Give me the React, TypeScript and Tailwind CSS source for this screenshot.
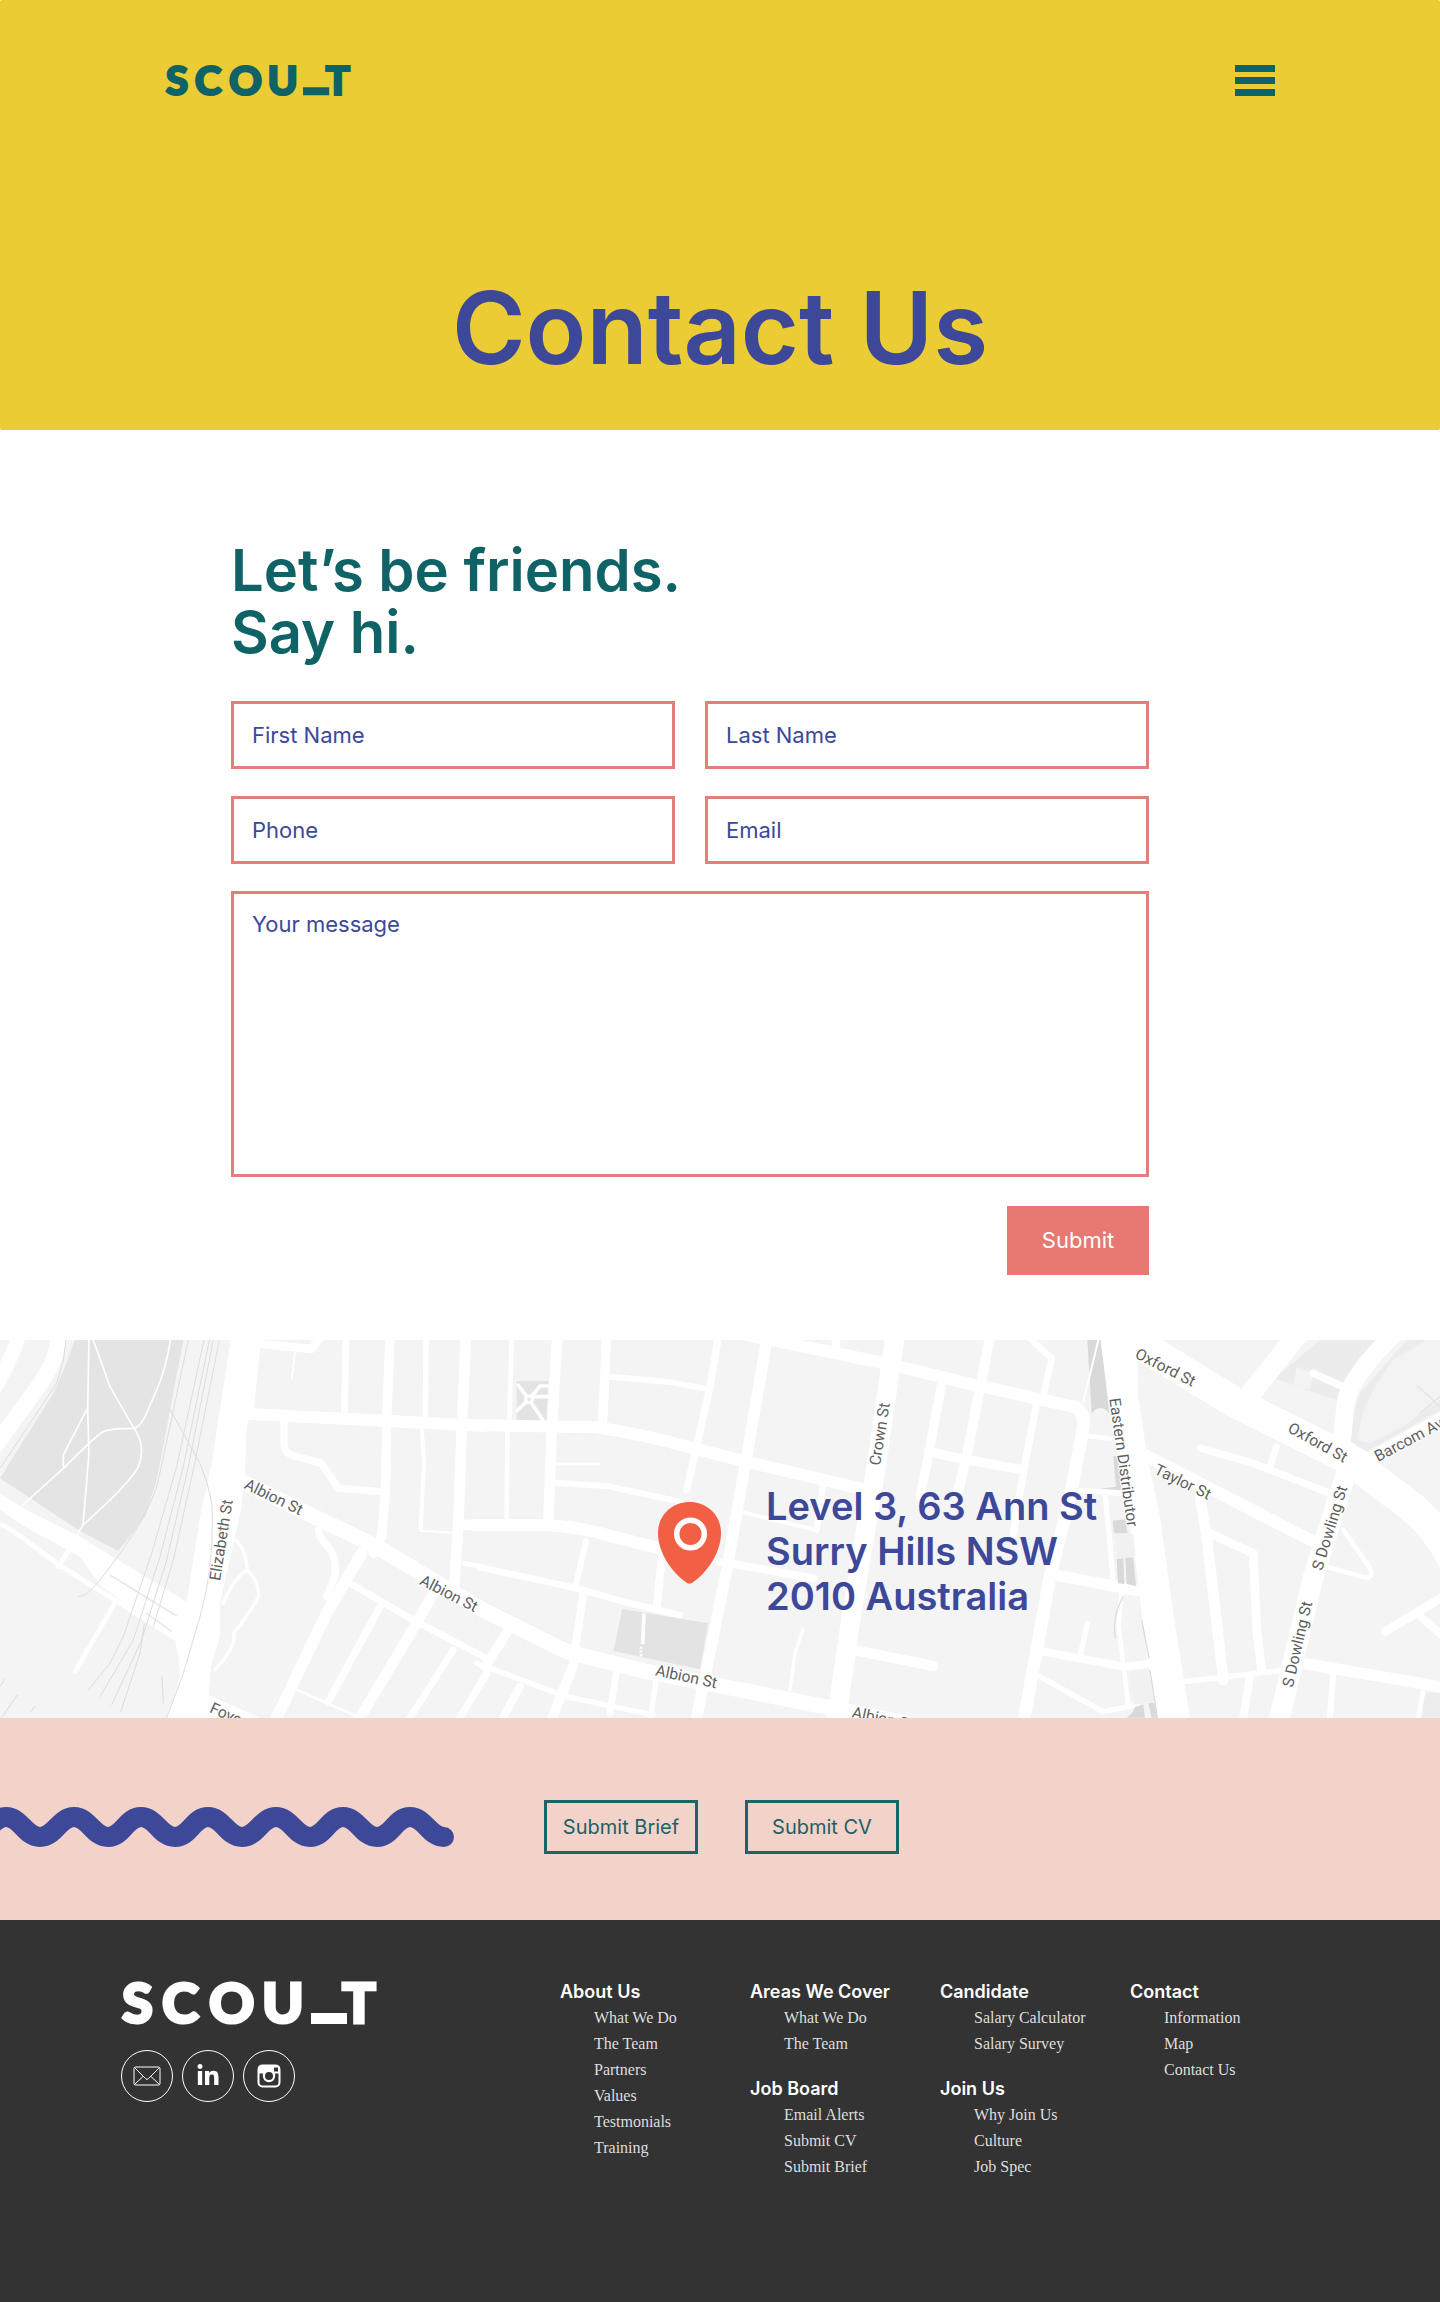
import type { ReactNode } from "react";
import { FaLinkedinIn } from "react-icons/fa";

function Wordmark({ className }: { className: string }) {
  return (
    <svg viewBox="0 0 256 44" className={className} role="img" aria-label="SCOU_T" fill="currentColor" overflow="visible">
      <text y="42" fontSize="56" fontWeight="900" fontFamily="Lato, sans-serif" stroke="currentColor" strokeWidth="3">
        <tspan x="1">S</tspan>
        <tspan x="41">C</tspan>
        <tspan x="88">O</tspan>
        <tspan x="141">U</tspan>
        <tspan x="192" dy="-9">_</tspan>
        <tspan x="221" dy="9">T</tspan>
      </text>
      <rect x="190" y="32" width="36" height="11" />
    </svg>
  );
}

type Road = [d: string, width: number];

const westRoads: Road[] = [
  ["M60,0 Q50,60 -30,200", 44],
  ["M178,20 Q165,110 100,190 L-30,370", 48],
  ["M0,582 Q20,585 170,700 L520,920", 15],
  ["M210,655 L175,710", 15],
  ["M350,810 L225,1025", 14],
  ["M783,42 L935,57 L965,20", 25],
  ["M885,70 L875,145", 6],
  ["M750,252 L1150,272 L1450,288", 36],
  ["M1038,20 L1033,250", 20],
  ["M1170,20 L1160,270 L1157,480 L1145,620 L1120,670", 28],
  ["M1278,20 L1276,270", 16],
  ["M1265,290 L1272,400 L1262,600", 12],
  ["M1262,602 L1360,608", 6],
  ["M1398,20 L1385,300 L1375,580 L1362,780", 32],
  ["M852,270 V345 Q855,370 880,378 L960,398 Q970,405 1015,475 L1140,485", 22],
  ["M715,450 L1130,650 L1440,835 L1700,965 L1930,1022 L2400,1115 L2720,1180", 46],
  ["M955,600 Q960,630 985,650 Q1010,680 1005,740 L980,800 L1000,815", 22],
  ["M1085,670 L980,850 L830,1163", 35],
  ["M1050,760 L1240,870 L1460,985", 20],
  ["M1140,830 L985,1115", 22],
  ["M880,1075 L1080,1163", 8],
  ["M1300,790 L1220,930 L1080,1163", 32],
  ["M1360,960 L1230,1163", 20],
  ["M1460,1030 L1370,1180", 22],
  ["M1395,585 H1500", 32],
  ["M1390,700 L1450,710", 14],
  ["M705,630 Q735,650 742,720 Q780,760 775,800 Q750,850 700,910 Q715,940 645,1020", 10],
  ["M742,720 Q700,745 670,820", 10],
];

const parkPaths = [
  "M267,20 L263,240 L267,370 L249,585 L225,625",
  "M278,25 L330,170 L402,295 Q440,350 415,410 Q390,460 249,585",
  "M512,25 Q500,110 470,180 L435,260 Q420,290 402,295 Q330,295 310,305 Q290,315 190,415 L65,528",
  "M262,235 L190,375 V412",
];

const railLines = [
  "M198,30 L190,90 L170,160 L0,415",
  "M565,30 L503,320 L475,450 Q450,560 300,750 Q260,800 235,800",
  "M612,30 L530,410 L455,670 L370,920 L330,1000 L265,1080",
  "M628,30 L550,410 L480,680 L400,930 L300,1100",
  "M640,30 L565,410 L500,690 L425,930 L335,1125",
  "M658,30 L582,410 L520,690 L460,890",
  "M510,238 L600,400 Q640,500 637,560 Q640,720 600,860 L550,1030 L500,1163",
  "M433,880 L420,970 L362,1145",
  "M486,1040 L490,1120",
  "M52,1095 L5,1163",
  "M105,1128 L93,1145",
  "M15,1045 L0,1070",
];

const centralRoads: Road[] = [
  ["M95,20 L88,280", 14],
  ["M82,300 L80,570", 14],
  ["M232,20 L215,300 L205,580", 32],
  ["M380,20 L368,275", 28],
  ["M-20,285 L350,292 Q480,310 640,355 L820,400 L1140,475", 36],
  ["M390,140 L560,155 L690,178", 18],
  ["M715,20 L690,170 L645,370 L620,480", 22],
  ["M862,20 L800,380 L740,720 L650,1163", 34],
  ["M800,15 L1240,105 L1440,155 L1790,232", 36],
  ["M1068,30 V60", 26],
  ["M1245,20 L1190,400 Q1140,700 1115,850 L1070,1163", 58],
  ["M220,402 H355", 8],
  ["M220,458 L380,468 L600,515", 18],
  ["M-20,585 H200 Q300,590 400,620 L560,660", 36],
  ["M720,695 L1000,745", 24],
  ["M0,712 L290,775 L430,815 L600,855", 20],
  ["M318,635 L285,775", 18],
  ["M310,790 L285,960", 24],
  ["M548,660 L530,830", 24],
  ["M80,910 L15,1010", 28],
  ["M-10,1000 L260,1100 L520,1155", 16],
  ["M120,1070 L60,1180", 24],
  ["M290,980 L210,1180", 30],
  ["M410,1020 L390,1150", 20],
  ["M530,1040 L512,1163", 16],
  ["M790,548 L1010,600", 12],
  ["M1030,455 L1010,600", 18],
  ["M968,900 L945,970 L930,1080", 10],
  ["M1120,960 L1360,1008", 30],
  ["M1385,160 L1345,380 L1320,500", 28],
  ["M1345,365 L1440,385 L1620,418", 28],
];

const eastRoads: Road[] = [
  ["M340,230 Q378,245 370,290 L335,480 Q300,620 270,740 L190,1180", 38],
  ["M90,20 L20,380 L-10,500", 30],
  ["M230,220 L195,400 L160,610", 22],
  ["M205,20 L275,85 L250,200", 20],
  ["M415,30 L370,215", 6],
  ["M380,318 L450,325", 14],
  ["M335,480 L490,490", 16],
  ["M285,735 L550,785", 34],
  ["M545,370 L1090,650", 36],
  ["M722,355 L880,400 L1110,490", 22],
  ["M950,350 L930,410", 20],
  ["M470,0 L820,215 L1190,400", 92],
  ["M1150,375 L1300,490 Q1420,570 1480,690", 92],
  ["M1020,5 L865,200", 62],
  ["M1310,5 Q1180,130 1158,210 L1140,390", 54],
  ["M1060,130 L1160,175", 22],
  ["M1190,405 L1470,250", 34],
  ["M1165,410 L1060,740 L955,1180", 62],
  ["M720,500 L740,620 L790,1050", 32],
  ["M750,610 L880,670 L890,900 L905,1020", 26],
  ["M670,1055 L960,1022", 16],
  ["M1000,995 L1450,1072", 34],
  ["M1120,1020 L1110,1163", 18],
  ["M870,1040 L850,1163", 24],
  ["M1390,1080 L1375,1163", 14],
  ["M1150,600 L1230,715 Q1242,748 1212,742 L1100,710", 14],
  ["M1275,905 L1450,800", 26],
  ["M1370,850 L1450,920", 24],
  ["M250,965 L490,1010 L580,1000", 24],
  ["M240,1040 L330,1090 L430,1145 L530,1125", 16],
  ["M435,490 L450,640 L460,760", 16],
  ["M485,790 L475,880 L505,1130", 14],
  ["M382,880 L362,970", 16],
];

const streetLabels: { text: string; x: number; y: number; angle: number }[] = [
  { text: "Albion St", x: 730, y: 474, angle: 26 },
  { text: "Albion St", x: 1256, y: 762, angle: 27 },
  { text: "Elizabeth St", x: 660, y: 754, angle: -81 },
  { text: "Foveaux St", x: 626, y: 1146, angle: 24 },
  { text: "Albion St", x: 1964, y: 1036, angle: 12 },
  { text: "Albion St", x: 2554, y: 1162, angle: 12 },
  { text: "Crown St", x: 2640, y: 408, angle: -81 },
  { text: "Oxford St", x: 3402, y: 82, angle: 27 },
  { text: "Oxford St", x: 3860, y: 304, angle: 29 },
  { text: "Taylor St", x: 3460, y: 430, angle: 26 },
  { text: "Barcom Ave", x: 4134, y: 396, angle: -28 },
  { text: "Eastern Distributor", x: 3328, y: 206, angle: 82 },
  { text: "S Dowling St", x: 3966, y: 724, angle: -73 },
  { text: "S Dowling St", x: 3878, y: 1074, angle: -77 },
];

function Roads({ roads }: { roads: Road[] }) {
  return (
    <g fill="none" stroke="#fff" strokeLinecap="round" strokeLinejoin="round">
      {roads.map(([d, width]) => (
        <path key={d} d={d} strokeWidth={width} />
      ))}
    </g>
  );
}

function StreetMap() {
  return (
    <svg
      viewBox="0 0 4320 1134"
      preserveAspectRatio="xMidYMid slice"
      className="absolute inset-0 h-full w-full"
      role="img"
      aria-label="Street map of Surry Hills"
    >
      <rect width="4320" height="1134" fill="#f4f4f4" />
      <g transform="translate(0 -30)">
        <path d="M225,30 H550 L510,240 L470,450 L435,560 L355,663 L235,600 L0,445 L160,190 L195,110Z" fill="#e4e4e4" />
        <g fill="none" stroke="#fff" strokeWidth="5">
          {parkPaths.map((d) => (
            <path key={d} d={d} />
          ))}
        </g>
        <path d="M0,490 L80,540 L240,620 L560,815 V935 H530 L300,765 L240,680 L75,590 L0,540Z" fill="#fff" />
        <path d="M692,30 H783 L762,235 L740,290 L735,430 L725,530 L660,820 L660,920 L635,1000 L625,1095 L780,1163 H500 L540,1040 L535,980 L520,900 L560,815 L600,560 L635,400Z" fill="#fff" />
        <g fill="none" stroke="#e9e9e9" strokeWidth="5">
          <path d="M330,735 L530,858 M440,850 L515,905" />
        </g>
      </g>
      <g transform="translate(1440 -30)">
        <path d="M110,153 H205 L200,272 H110Z M427,837 L685,880 L660,1018 L400,963Z" fill="#e3e3e3" />
        <g fill="none" stroke="#fff" strokeWidth="11">
          <path d="M112,162 L147,208 L192,275 M108,245 L147,208 L180,168 H206 M150,200 H206 M492,850 L488,942" />
        </g>
        <circle cx="147" cy="208" r="15" fill="#fff" />
        <circle cx="147" cy="208" r="5" fill="#e3e3e3" />
        <path d="M483,950 V980" stroke="#fff" strokeWidth="8" strokeDasharray="7 4" />
      </g>
      <g transform="translate(2880 -30)">
        <path d="M1080,30 H1260 L1130,210 L1040,180 L945,145Z M1340,30 H1440 V240 L1210,370 L1165,340 L1180,250 L1200,190Z" fill="#ececec" />
        <path d="M1010,110 L1060,130 L1050,180 L1000,165Z M1250,160 L1300,90 L1400,30 H1440 V210 L1330,290 L1230,340 L1190,330 L1210,240Z" fill="#f3f3f3" />
        <path d="M1370,165 L1440,230 M1380,250 L1440,200" stroke="#e4e4e4" strokeWidth="4" />
        <path d="M1395,1090 H1440 V1163 H1385Z" fill="#ededed" />
      </g>
      <g transform="translate(0 -30)">
        <Roads roads={westRoads} />
        <g fill="none" stroke="#dddddd" strokeWidth="3">
          {railLines.map((d) => (
            <path key={d} d={d} />
          ))}
        </g>
      </g>
      <g transform="translate(1440 -30)">
        <Roads roads={centralRoads} />
      </g>
      <g transform="translate(2880 -30)">
        <path d="M382,30 H422 L448,250 H395Z" fill="#d9d9d9" />
        <path d="M393,300 V262 Q400,234 422,234 Q445,236 452,262 V300Z" fill="#f4f4f4" />
        <Roads roads={eastRoads} />
        <path d="M422,30 H530 L535,200 L560,370 L600,560 L640,850 L690,1163 H595 L560,980 L530,720 L490,450 L445,200Z" fill="#fff" />
        <path d="M460,378 H474 L484,480 L420,476 L468,470Z M458,572 L495,568 L503,610 H462Z M470,686 L490,685 L493,762 L474,760Z M496,684 L520,682 L528,768 L500,762Z M500,1163 Q520,1150 525,1130 L550,1124 L555,1163Z M565,1120 L582,1118 L594,1163 H575Z" fill="#d9d9d9" />
        <path d="M465,612 H520 L526,678 L472,686Z M508,1025 L568,1020 L582,1118 L520,1124Z" fill="#f1f1f1" />
        <path d="M490,800 Q455,860 466,925 M545,870 L567,985 M570,1020 L590,1150" fill="none" stroke="#dcdcdc" strokeWidth="4" />
      </g>
      <g
        transform="translate(0 -30)"
        fontFamily="Roboto, sans-serif"
        fontSize="47"
        fill="#5e5e5e"
        stroke="#fff"
        strokeWidth="6"
        strokeLinejoin="round"
        paintOrder="stroke"
      >
        {streetLabels.map(({ text, x, y, angle }) => (
          <text key={`${x}-${y}`} transform={`translate(${x} ${y}) rotate(${angle})`}>
            {text}
          </text>
        ))}
      </g>
    </svg>
  );
}

function MapPin() {
  return (
    <svg viewBox="0 0 63 82" className="mt-[18px] h-[82px] w-[63px] shrink-0" aria-hidden="true">
      <path d="M31.500,0 C49,0 63,13 63,31 C63,50 50,70 34,81 Q31.500,82 29,81 C13,70 0,50 0,31 C0,13 14,0 31.500,0Z" fill="#f15f44" />
      <circle cx="32.500" cy="32" r="13.800" fill="none" stroke="#fff" strokeWidth="5.500" />
    </svg>
  );
}

function Wave() {
  return (
    <svg viewBox="0 0 454 42" className="h-[42px] w-[454px] shrink-0" aria-hidden="true">
      <path
        d="M-27,31 C-12,31 -9,11 6,11 S25,31 40,31 S59,11 74,11 S93,31 108,31 S126,11 141,11 S160,31 175,31 S193,11 208,11 S227,31 242,31 S261,11 276,11 S295,31 310,31 S328,11 343,11 S362,31 377,31 S395,11 410,11 S429,31 444,31"
        fill="none"
        stroke="#3d4899"
        strokeWidth="20"
        strokeLinecap="round"
      />
    </svg>
  );
}

function Field({ id, label, type = "text" }: { id: string; label: string; type?: string }) {
  return (
    <div>
      <label htmlFor={id} className="sr-only">
        {label}
      </label>
      <input
        id={id}
        type={type}
        placeholder={label}
        className="h-[68px] w-full border-3 border-[#e27f7b] bg-white px-[18px] text-[22px] leading-8 text-[#3d4899] placeholder:text-[#3d4899]"
      />
    </div>
  );
}

function LinkGroup({ title, links }: { title: string; links: string[] }) {
  return (
    <section>
      <h3 className="text-[18px] leading-[27px] font-semibold whitespace-nowrap text-white">{title}</h3>
      <ul className="pl-[34px] font-['Liberation_Serif',serif] text-[16px] leading-[26px] whitespace-nowrap text-[#dedede]">
        {links.map((link) => (
          <li key={link}>
            <a href="#">{link}</a>
          </li>
        ))}
      </ul>
    </section>
  );
}

function Social({ label, children }: { label: string; children: ReactNode }) {
  return (
    <a href="#" aria-label={label} className="flex size-[52px] items-center justify-center rounded-full border border-white text-white">
      {children}
    </a>
  );
}

export default function App() {
  return (
    <div className="min-h-screen bg-white font-[Inter,sans-serif]">
      <header className="rounded-xs bg-[#ebcc35] px-6 pt-16 pb-[42px]">
        <div className="mx-auto flex max-w-[1110px] items-center justify-between text-[#0f6265]">
          <a href="#">
            <Wordmark className="h-8 w-[186px]" />
          </a>
          <button type="button" aria-label="Open menu" className="flex w-10 flex-col gap-[5px]">
            <span className="h-[7px] w-full bg-current" />
            <span className="h-[7px] w-full bg-current" />
            <span className="h-[7px] w-full bg-current" />
          </button>
        </div>
        <h1 className="mt-[172px] text-center text-[100px] leading-[120px] font-semibold text-[#3d4899]">Contact Us</h1>
      </header>

      <main>
        <section className="mx-auto max-w-[1110px] pt-[109px] pr-[126px] pb-[65px] pl-[66px]">
          <h2 className="text-[58px] leading-[62px] font-semibold text-[#0f6265]">
            Let’s be friends.
            <br />
            Say hi.
          </h2>
          <form className="mt-[38px] flex flex-col gap-[27px]">
            <div className="grid grid-cols-1 gap-x-[30px] gap-y-[27px] md:grid-cols-2">
              <Field id="first-name" label="First Name" />
              <Field id="last-name" label="Last Name" />
              <Field id="phone" label="Phone" type="tel" />
              <Field id="email" label="Email" type="email" />
            </div>
            <div className="flex">
              <label htmlFor="message" className="sr-only">
                Your message
              </label>
              <textarea
                id="message"
                placeholder="Your message"
                className="h-[286px] w-full resize-none border-3 border-[#e27f7b] bg-white px-[18px] py-[14px] text-[22px] leading-8 text-[#3d4899] placeholder:text-[#3d4899]"
              />
            </div>
            <button type="submit" className="mt-[2px] h-[69px] w-[142px] self-end bg-[#e77872] text-[22px] text-white">
              Submit
            </button>
          </form>
        </section>

        <section className="relative h-[378px] overflow-hidden">
          <StreetMap />
          <div className="relative flex items-start gap-[45px] pt-[144px] pl-[45.7%]">
            <MapPin />
            <address className="text-[38px] leading-[45px] font-semibold whitespace-nowrap text-[#3d4899] not-italic">
              Level 3, 63 Ann St
              <br />
              Surry Hills NSW
              <br />
              2010 Australia
            </address>
          </div>
        </section>

        <section className="flex flex-wrap items-center gap-x-[90px] gap-y-6 overflow-hidden bg-[#f3d3c9] pt-[82px] pb-[66px]">
          <Wave />
          <div className="flex flex-wrap gap-[47px] text-[20px] text-[#1c6165]">
            <button type="button" className="h-[54px] w-[154px] border-3 border-[#1c6468]">
              Submit Brief
            </button>
            <button type="button" className="h-[54px] w-[154px] border-3 border-[#1c6468]">
              Submit CV
            </button>
          </div>
        </section>
      </main>

      <footer className="min-h-[382px] bg-[#333333] px-6 pt-[58px] pb-10">
        <div className="mx-auto flex max-w-[1200px] flex-wrap items-start gap-y-10">
          <div className="w-[440px] pt-[3px] pl-px">
            <a href="#" className="block w-fit text-white">
              <Wordmark className="h-11 w-[256px]" />
            </a>
            <div className="mt-[25px] flex gap-[9px]">
              <Social label="Email">
                <svg viewBox="0 0 28 20" className="h-5 w-7" fill="none" stroke="currentColor" aria-hidden="true">
                  <rect x="1" y="1" width="26" height="18" rx="1.500" />
                  <path d="M1.500,1.500 L12.500,12.500 Q14,14.500 15.500,12.500 L26.500,1.500 M1.500,18.500 L10,10.500 M26.500,18.500 L18,10.500" />
                </svg>
              </Social>
              <Social label="LinkedIn">
                <FaLinkedinIn className="size-6" />
              </Social>
              <Social label="Instagram">
                <svg viewBox="0 0 24 24" className="size-6" fill="currentColor" aria-hidden="true">
                  <rect x="1.500" y="1.500" width="21" height="21" rx="4" fill="none" stroke="currentColor" strokeWidth="2" />
                  <path d="M1,9.500 V5 Q1,1 5,1 H19 Q23,1 23,5 V9.500Z" />
                  <circle cx="12" cy="12" r="6.200" />
                  <circle cx="12" cy="12" r="4" fill="#333333" />
                  <rect x="17" y="3.500" width="4" height="4" rx="0.500" fill="#333333" />
                </svg>
              </Social>
            </div>
          </div>
          <nav aria-label="Footer" className="grid flex-1 grid-cols-[repeat(auto-fill,190px)] items-start">
            <LinkGroup title="About Us" links={["What We Do", "The Team", "Partners", "Values", "Testmonials", "Training"]} />
            <div className="flex flex-col gap-[18px]">
              <LinkGroup title="Areas We Cover" links={["What We Do", "The Team"]} />
              <LinkGroup title="Job Board" links={["Email Alerts", "Submit CV", "Submit Brief"]} />
            </div>
            <div className="flex flex-col gap-[18px]">
              <LinkGroup title="Candidate" links={["Salary Calculator", "Salary Survey"]} />
              <LinkGroup title="Join Us" links={["Why Join Us", "Culture", "Job Spec"]} />
            </div>
            <LinkGroup title="Contact" links={["Information", "Map", "Contact Us"]} />
          </nav>
        </div>
      </footer>
    </div>
  );
}
